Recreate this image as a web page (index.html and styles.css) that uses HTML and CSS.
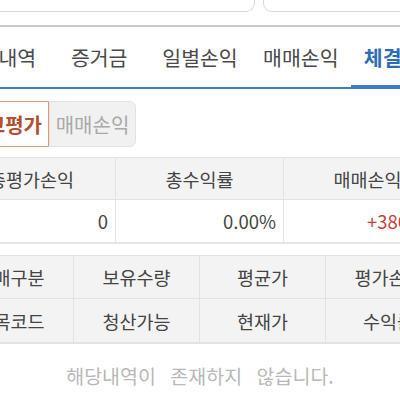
FILE: index.html
```html
<!DOCTYPE html>
<html lang="ko">
<head>
<meta charset="utf-8">
<link rel="stylesheet" href="styles.css">
</head>
<body>
<div class="page">
  <div class="top">
    <div class="search">
      <div class="box box-left"></div>
      <div class="box box-right"></div>
    </div>
  </div>
  <nav class="tabs">
    <div class="tab">잔고내역</div>
    <div class="tab">증거금</div>
    <div class="tab">일별손익</div>
    <div class="tab">매매손익</div>
    <div class="tab active">체결내역</div>
  </nav>
  <div class="seg">
    <div class="seg-btn on">잔고평가</div>
    <div class="seg-btn">매매손익</div>
  </div>
  <div class="sum">
    <div class="cell head">총평가손익</div>
    <div class="cell head">총수익률</div>
    <div class="cell head">매매손익</div>
    <div class="cell num">0</div>
    <div class="cell num">0.00%</div>
    <div class="cell num plus">+386,000</div>
  </div>
  <div class="cols">
    <div class="cell head">매매구분</div>
    <div class="cell head">보유수량</div>
    <div class="cell head">평균가</div>
    <div class="cell head">평가손익</div>
    <div class="cell head">종목코드</div>
    <div class="cell head">청산가능</div>
    <div class="cell head">현재가</div>
    <div class="cell head">수익률</div>
  </div>
  <p class="empty">해당내역이 존재하지 않습니다.</p>
</div>
</body>
</html>
```

FILE: styles.css
```css
html, body {
  margin: 0;
  padding: 0;
  background: #ffffff;
  overflow: hidden;
}

body {
  font-family: "Noto Sans CJK KR", "Noto Sans", sans-serif;
  color: #444444;
}

.page {
  width: 504px;
  margin-left: -52px;
}

.top {
  padding-bottom: 13px;
  border-bottom: 2px solid #c9c9c9;
}

.search {
  display: flex;
  gap: 8px;
  height: 12px;
}

.box {
  height: 11px;
  border: 1px solid #d9d9d9;
  border-top: none;
  border-radius: 0 0 9px 9px;
}

.box-left {
  width: 305px;
}

.box-right {
  flex: 1;
}

.tabs {
  display: grid;
  grid-template-columns: repeat(5, 1fr);
  height: 60px;
  border-bottom: 2px solid #3f7cc6;
}

.tab {
  display: flex;
  align-items: center;
  justify-content: center;
  font-size: 20.5px;
  color: #4a4a4a;
  white-space: nowrap;
}

.tab.active {
  color: #2f6cb8;
  font-weight: 700;
  box-shadow: inset 0 -2px 0 #3f7cc6;
}

.seg {
  display: flex;
  padding: 12px 0 0 18px;
}

.seg-btn {
  flex: none;
  width: 87px;
  box-sizing: border-box;
  height: 46px;
  display: flex;
  align-items: center;
  justify-content: center;
  font-size: 20px;
  color: #a9a9a9;
  background: #f1f1f1;
  border: 1px solid #e3e3e3;
  border-radius: 0 6px 6px 0;
  white-space: nowrap;
}

.seg-btn.on {
  width: 83px;
  color: #b0502c;
  font-weight: 700;
  background: #ffffff;
  border-color: #d99a82;
  border-radius: 6px 0 0 6px;
  justify-content: flex-end;
  padding-right: 6px;
}

.sum {
  margin-top: 10px;
  display: grid;
  grid-template-columns: repeat(3, 168px);
  grid-auto-rows: 42px;
  border-top: 1px solid #e2e2e2;
  border-bottom: 2px solid #e6e6e6;
}

.cols {
  margin-top: 11px;
  display: grid;
  grid-template-columns: repeat(4, 126px);
  grid-auto-rows: 43px;
  border-top: 1px solid #e2e2e2;
  border-bottom: 2px solid #e3e3e3;
}

.cell {
  display: flex;
  align-items: center;
  justify-content: center;
  font-size: 18.5px;
  color: #444444;
  white-space: nowrap;
  border-right: 1px solid #e2e2e2;
  border-bottom: 1px solid #e2e2e2;
}

.cell.head {
  background: #f3f3f3;
}

.cols .cell:nth-last-child(-n+4),
.sum .cell:nth-last-child(-n+3) {
  border-bottom: none;
}

.cell.num {
  justify-content: flex-end;
  padding-right: 7px;
  background: #ffffff;
}

.cell.plus {
  color: #c8403a;
}

.empty {
  margin: 17px 0 0;
  text-align: center;
  font-size: 19.5px;
  color: #b8b8b8;
  word-spacing: 9px;
}
```
